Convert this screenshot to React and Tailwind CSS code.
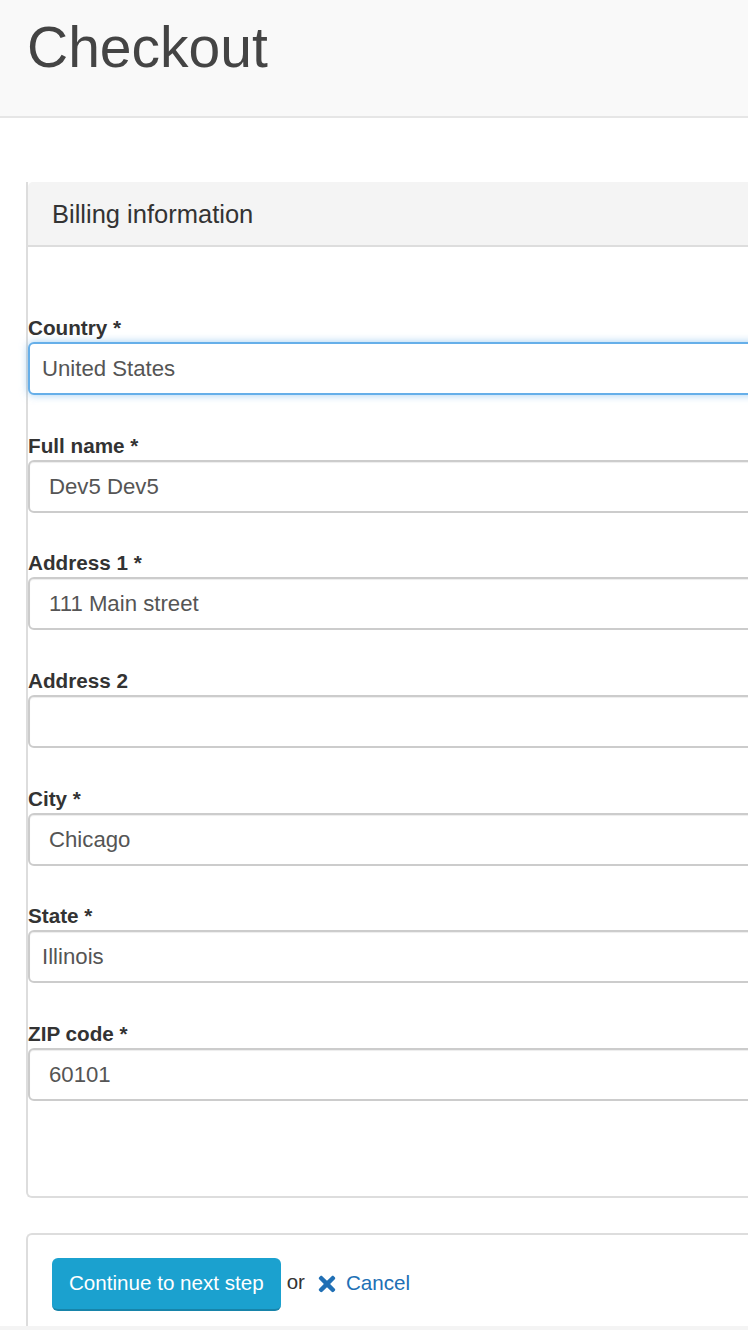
import { FaTimes } from "react-icons/fa";

const fields = [
  { label: "Country *", value: "United States", select: true, focus: true },
  { label: "Full name *", value: "Dev5 Dev5" },
  { label: "Address 1 *", value: "111 Main street" },
  { label: "Address 2", value: "" },
  { label: "City *", value: "Chicago" },
  { label: "State *", value: "Illinois", select: true },
  { label: "ZIP code *", value: "60101" },
];

function Field({ label, value, select, focus }) {
  const box = focus
    ? "border-[#66afe9] shadow-[0_0_8px_rgba(102,175,233,0.6)]"
    : "border-[#cccccc] shadow-[inset_0_1px_1px_rgba(0,0,0,0.075)]";
  return (
    <div>
      <div className="h-[24px] leading-[24px] mb-[2px] text-[20.7px] font-bold text-[#333]">{label}</div>
      <div
        className={`h-[53px] w-[760px] flex items-center border-2 rounded-[6px] bg-white text-[22.2px] text-[#555] ${box} ${
          select ? "pl-[12px]" : "pl-[19px]"
        }`}
      >
        {value}
      </div>
    </div>
  );
}

export default function App() {
  return (
    <div className="w-full overflow-hidden bg-white font-['Liberation_Sans',Arial,sans-serif]">
      {/* page header */}
      <div className="h-[118px] bg-[#f9f9f9] border-b-2 border-[#e6e6e6] pl-[27px] pt-[12px]">
        <h1 className="text-[57px] leading-[70px] text-[#444]">Checkout</h1>
      </div>

      {/* billing panel */}
      <div className="ml-[26px] mt-[98px] w-[800px] border-l-2 border-b-2 border-[#dddddd] rounded-bl-[6px] pb-[95px]">
        <div className="-mt-[34px] h-[65px] bg-[#f4f4f4] border-b-2 border-[#dddddd] rounded-tl-[5px] pl-[24px] pt-[2px] flex items-center text-[25.5px] text-[#333]">
          Billing information
        </div>
        <div className="pt-[69px] flex flex-col gap-[38.7px]">
          {fields.map((f) => (
            <Field key={f.label} {...f} />
          ))}
        </div>
      </div>

      {/* actions */}
      <div className="ml-[26px] mt-[35px] w-[800px] border-t-2 border-l-2 border-[#dddddd] rounded-tl-[6px] pt-[23px] pl-[24px] pb-[15px] flex items-center">
        <button className="h-[53px] px-[17px] rounded-[6px] bg-[#1ba1cf] border-b-2 border-[#1784aa] text-white text-[20.6px]">
          Continue to next step
        </button>
        <span className="ml-[6px] -mt-[4px] text-[20.5px] text-[#333]">or</span>
        <a href="#" className="ml-[10px] -mt-[2px] flex items-center gap-[7px] text-[20.6px] text-[#2170b5]">
          <FaTimes size={24} />
          Cancel
        </a>
      </div>
      <div className="h-[20px] bg-[#f4f4f4]" />
    </div>
  );
}
